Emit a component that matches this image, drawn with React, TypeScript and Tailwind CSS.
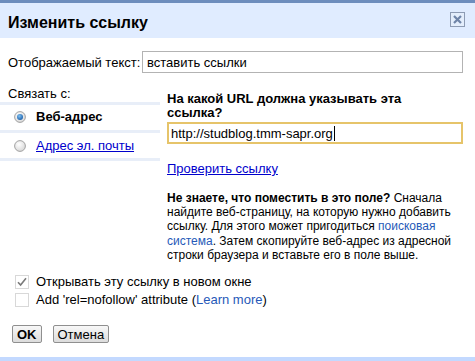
import React from "react";

function Radio({ checked }: { checked: boolean }) {
  return (
    <svg width="12" height="12" viewBox="0 0 12 12" className="shrink-0">
      <defs>
        <radialGradient id={checked ? "rg1" : "rg2"} cx="40%" cy="35%" r="70%">
          <stop offset="0%" stopColor="#ffffff" />
          <stop offset="100%" stopColor="#d6d6d6" />
        </radialGradient>
        <radialGradient id="dot" cx="40%" cy="35%" r="70%">
          <stop offset="0%" stopColor="#7fc0f0" />
          <stop offset="100%" stopColor="#1a5da8" />
        </radialGradient>
      </defs>
      <circle cx="6" cy="6" r="5.4" fill={`url(#${checked ? "rg1" : "rg2"})`} stroke="#9a9a9a" strokeWidth="0.9" />
      {checked && <circle cx="6" cy="6" r="3" fill="url(#dot)" />}
    </svg>
  );
}

function Checkbox({ checked }: { checked: boolean }) {
  return (
    <svg width="14" height="14" viewBox="0 0 14 14" className="shrink-0">
      <rect x="0.5" y="0.5" width="13" height="13" fill="#ffffff" stroke="#d8d8d8" />
      {checked && (
        <path d="M3 7.2 L5.6 10 L11 3.2" fill="none" stroke="#7a7a7a" strokeWidth="1.6" />
      )}
    </svg>
  );
}

export default function App() {
  return (
    <div
      className="w-[475px] h-[361px] bg-white flex flex-col text-[13px] text-black overflow-hidden"
      style={{ fontFamily: '"Liberation Sans", Arial, sans-serif' }}
    >
      <div className="h-[3px] bg-[#6d8dbd] shrink-0" />
      <div className="h-[35px] bg-[#e0ecff] flex items-center justify-between pl-2 pr-[10px] shrink-0">
        <div className="text-[16px] font-bold leading-none pt-[4px]">Изменить ссылку</div>
        <svg width="15" height="15" viewBox="0 0 15 15" className="mb-[2px]">
          <rect x="0.5" y="0.5" width="14" height="14" fill="#e4eefc" stroke="#8d9bb3" />
          <path d="M4 4 L11 11 M11 4 L4 11" stroke="#6f84a8" strokeWidth="2.2" />
        </svg>
      </div>
      <div className="flex-1 flex flex-col">
        <div className="flex items-center pl-2 pt-[13px]">
          <span className="w-[134px] leading-[15px]">Отображаемый текст:</span>
          <div className="w-[321px] h-[22px] border border-[#b3b3b3] flex items-center pl-[4px] leading-none">
            вставить ссылки
          </div>
        </div>
        <div className="flex mt-[13px]">
          <div className="w-[160px] shrink-0 flex flex-col">
            <div className="pl-2 leading-[15px]">Связать с:</div>
            <div className="mt-[1px] flex flex-col">
              <div className="h-[3px] bg-[#e8eef8]" />
              <div className="h-[25px] flex items-center pl-[14px] gap-[10px] pb-[2px]">
                <Radio checked />
                <span className="font-bold">Веб-адрес</span>
              </div>
              <div className="h-[3px] bg-[#e8eef8]" />
              <div className="h-[25px] flex items-center pl-[14px] gap-[10px]">
                <Radio checked={false} />
                <span className="text-[#0000cc] underline">Адрес эл. почты</span>
              </div>
              <div className="h-[3px] bg-[#e8eef8]" />
            </div>
          </div>
          <div className="flex-1 pl-[7px] pr-[12px] pt-[6px] flex flex-col">
            <div className="font-bold leading-[14px]">
              На какой URL должна указывать эта
              <br />
              ссылка?
            </div>
            <div className="mt-[2px] h-[22px] border-2 border-[#e6c46a] flex items-center pl-[2px] leading-none">
              http://studblog.tmm-sapr.org
              <span className="inline-block w-[1px] h-[15px] bg-black ml-[1px]" />
            </div>
            <div className="mt-[17px] text-[#0000cc] underline leading-[15px]">Проверить ссылку</div>
            <div className="mt-[15px] text-[12px] leading-[14.2px]">
              <b>Не знаете, что поместить в это поле?</b> Сначала найдите веб-страницу, на которую нужно
              добавить ссылку. Для этого может пригодиться{" "}
              <span className="text-[#2659b8]">поисковая система</span>. Затем скопируйте веб-адрес из
              адресной строки браузера и вставьте его в поле выше.
            </div>
          </div>
        </div>
        <div className="mt-[12px] pl-[15px] flex flex-col gap-[3px]">
          <div className="flex items-center gap-[7px] leading-[15px]">
            <Checkbox checked />
            <span>Открывать эту ссылку в новом окне</span>
          </div>
          <div className="flex items-center gap-[7px] leading-[15px]">
            <Checkbox checked={false} />
            <span>
              Add 'rel=nofollow' attribute (<span className="text-[#2659b8]">Learn more</span>)
            </span>
          </div>
        </div>
        <div className="mt-[18px] pl-[12px] flex gap-[11px]">
          <button className="h-[18px] px-[4px] border border-[#8f8f8f] rounded-[2px] bg-gradient-to-b from-[#f8f8f8] to-[#dcdcdc] font-bold leading-none text-[13px]">
            OK
          </button>
          <button className="h-[18px] px-[4px] border border-[#8f8f8f] rounded-[2px] bg-gradient-to-b from-[#f8f8f8] to-[#dcdcdc] leading-none text-[13px]">
            Отмена
          </button>
        </div>
      </div>
      <div className="h-[4px] bg-[#c3d9ff] shrink-0" />
    </div>
  );
}
